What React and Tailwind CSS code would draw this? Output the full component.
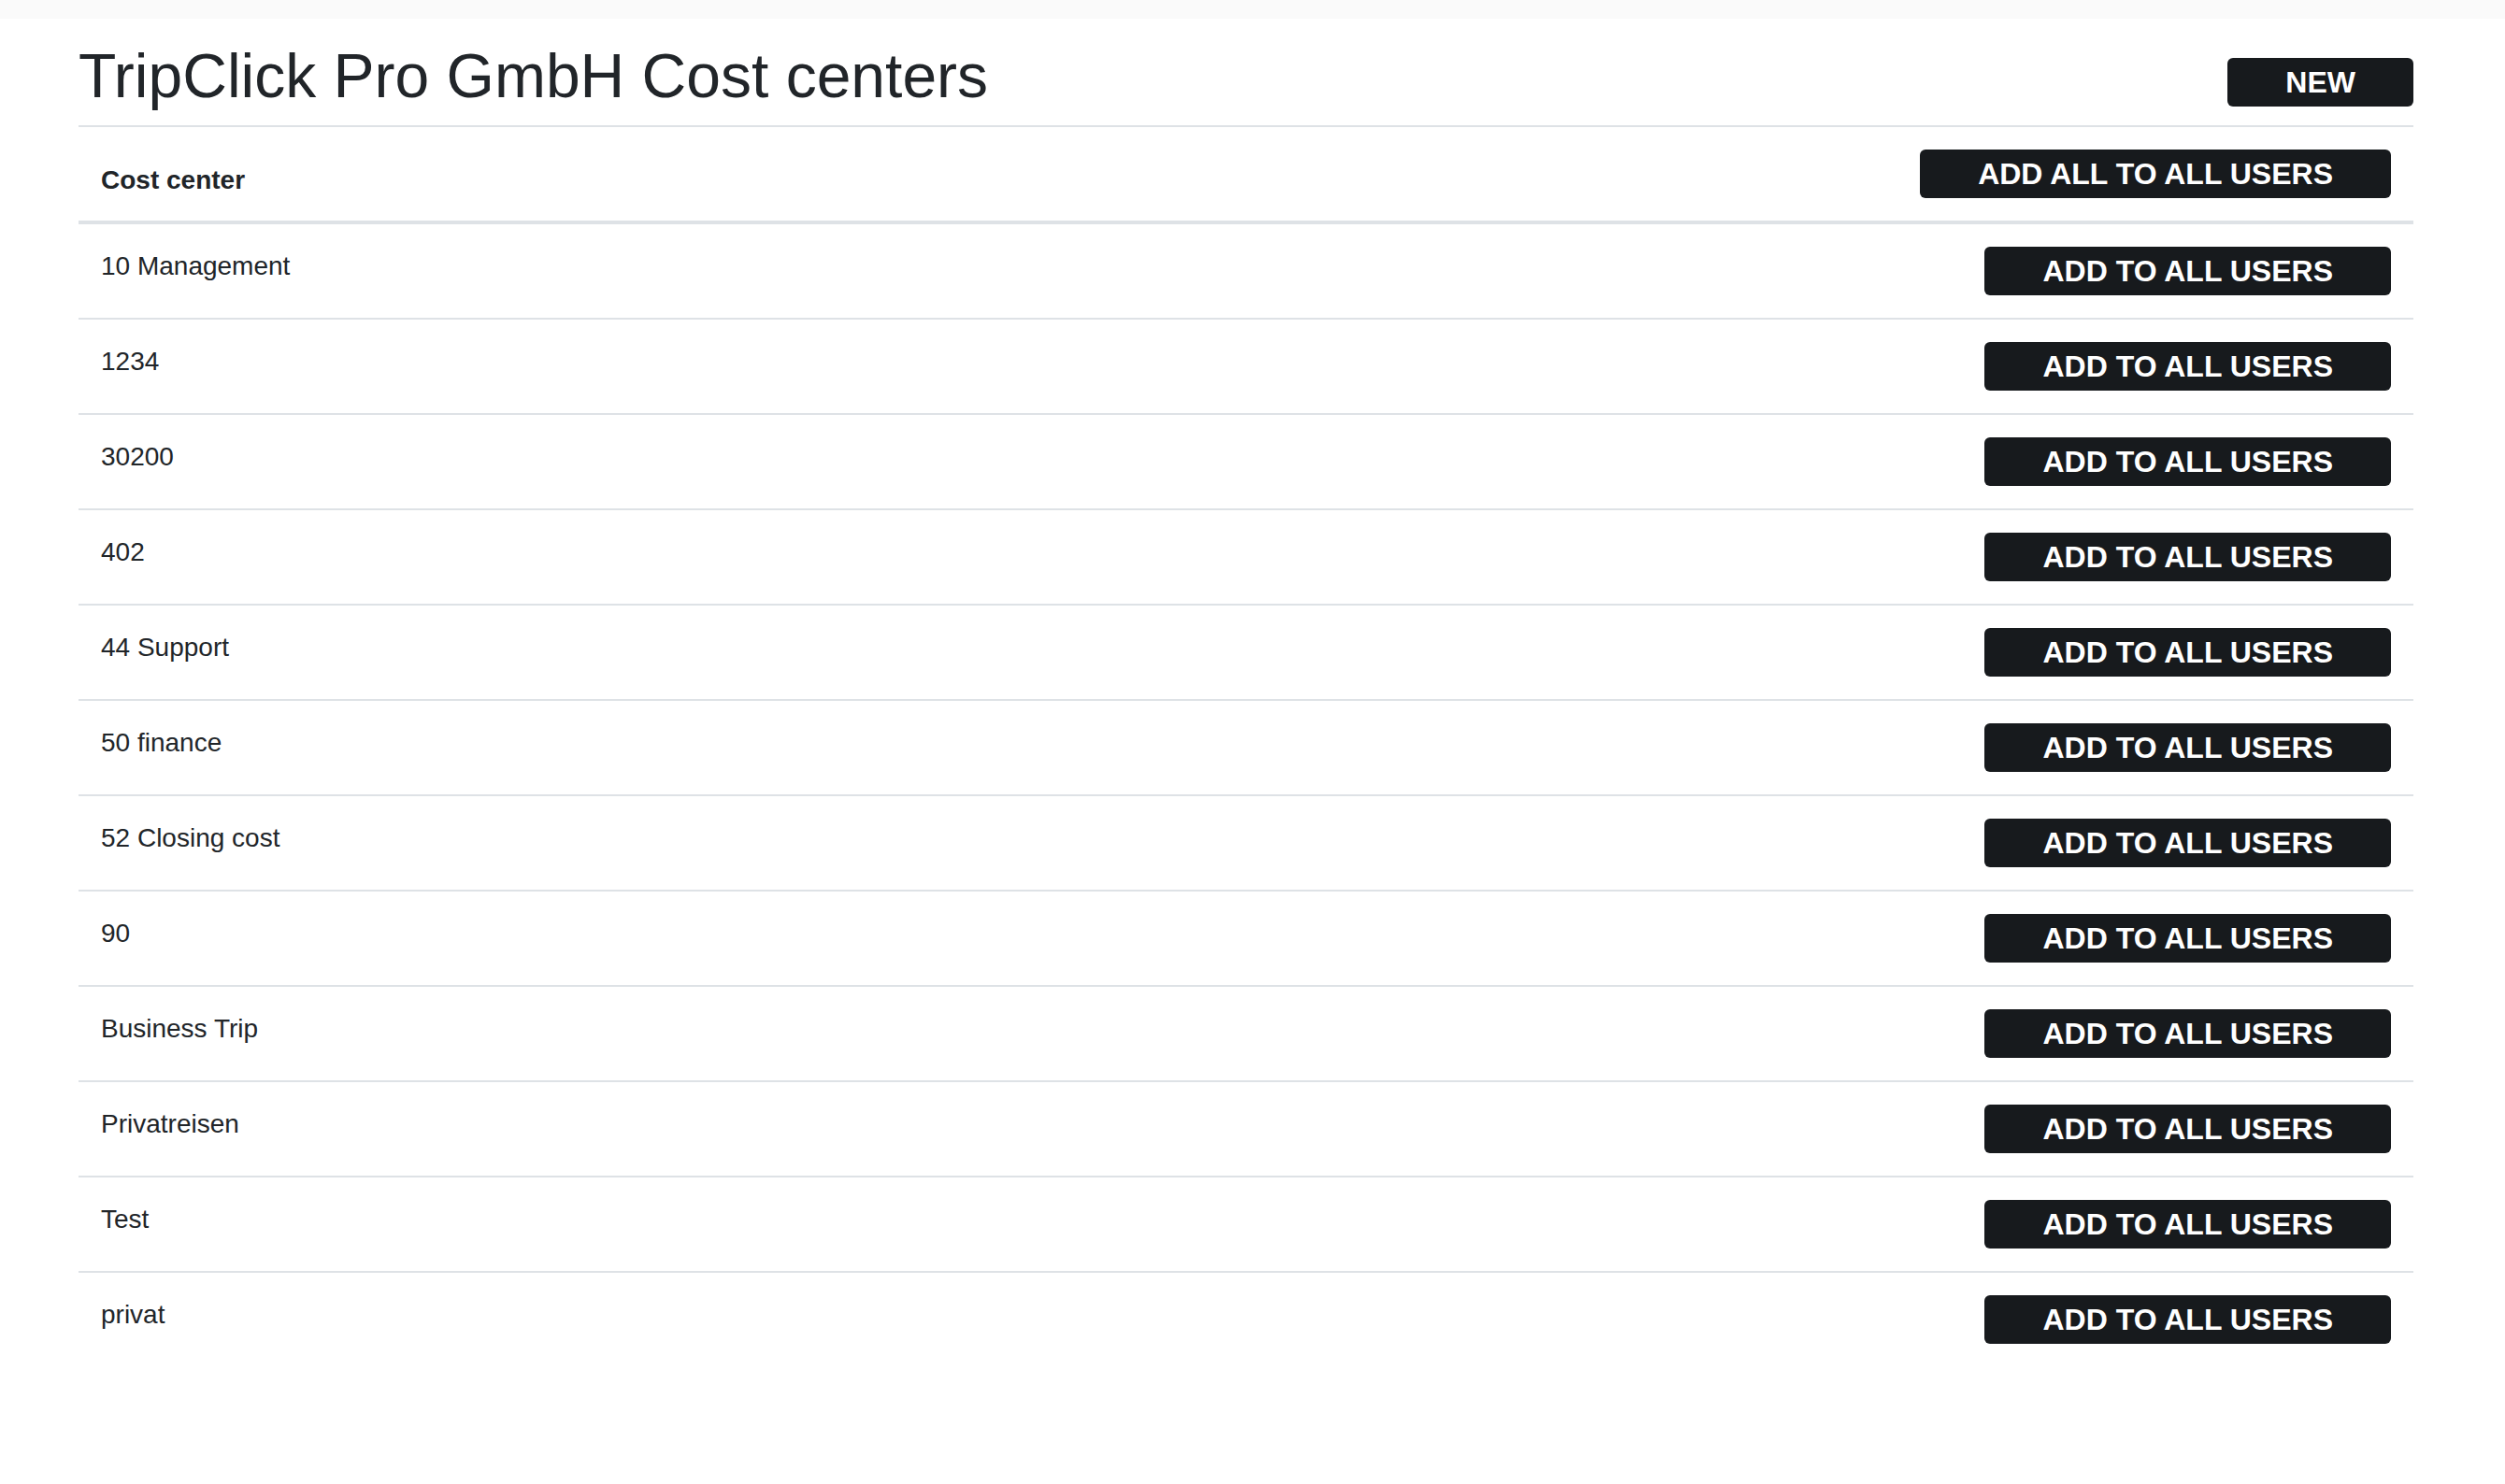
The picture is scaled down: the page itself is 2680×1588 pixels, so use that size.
import React from "react";

const costCenters = [
  "10 Management",
  "1234",
  "30200",
  "402",
  "44 Support",
  "50 finance",
  "52 Closing cost",
  "90",
  "Business Trip",
  "Privatreisen",
  "Test",
  "privat",
];

function DarkButton({ children }) {
  return (
    <button className="h-[52px] px-[62px] flex items-center justify-center rounded-[6px] bg-[#171a1d] text-white text-[32px] font-bold uppercase leading-none whitespace-nowrap">
      {children}
    </button>
  );
}

export default function App() {
  return (
    <div className="min-h-screen bg-white text-[#212529] font-['Liberation_Sans',Arial,sans-serif]">
      <div className="h-[20px] bg-[#fafafa]" />

      <div className="ml-[84px] w-[2498px]">
        <div className="flex items-start justify-between pt-[22px] mb-[13px]">
          <h1 className="text-[66px] leading-[1.2] font-medium">TripClick Pro GmbH Cost centers</h1>
          <div className="mt-[20px]">
            <DarkButton>New</DarkButton>
          </div>
        </div>

        <div className="border-t-2 border-[#dee2e6]">
          <div className="flex justify-between px-[24px] py-[24px] border-b-2 border-[#dee2e6]">
            <div className="self-end text-[28px] leading-[1.5] font-bold translate-y-[2px]">Cost center</div>
            <DarkButton>Add all to all users</DarkButton>
          </div>

          {costCenters.map((name) => (
            <div
              key={name}
              className="flex items-start justify-between px-[24px] py-[24px] border-t-2 border-[#dee2e6]"
            >
              <span className="text-[28px] leading-[1.5]">{name}</span>
              <DarkButton>Add to all users</DarkButton>
            </div>
          ))}
        </div>
      </div>
    </div>
  );
}
